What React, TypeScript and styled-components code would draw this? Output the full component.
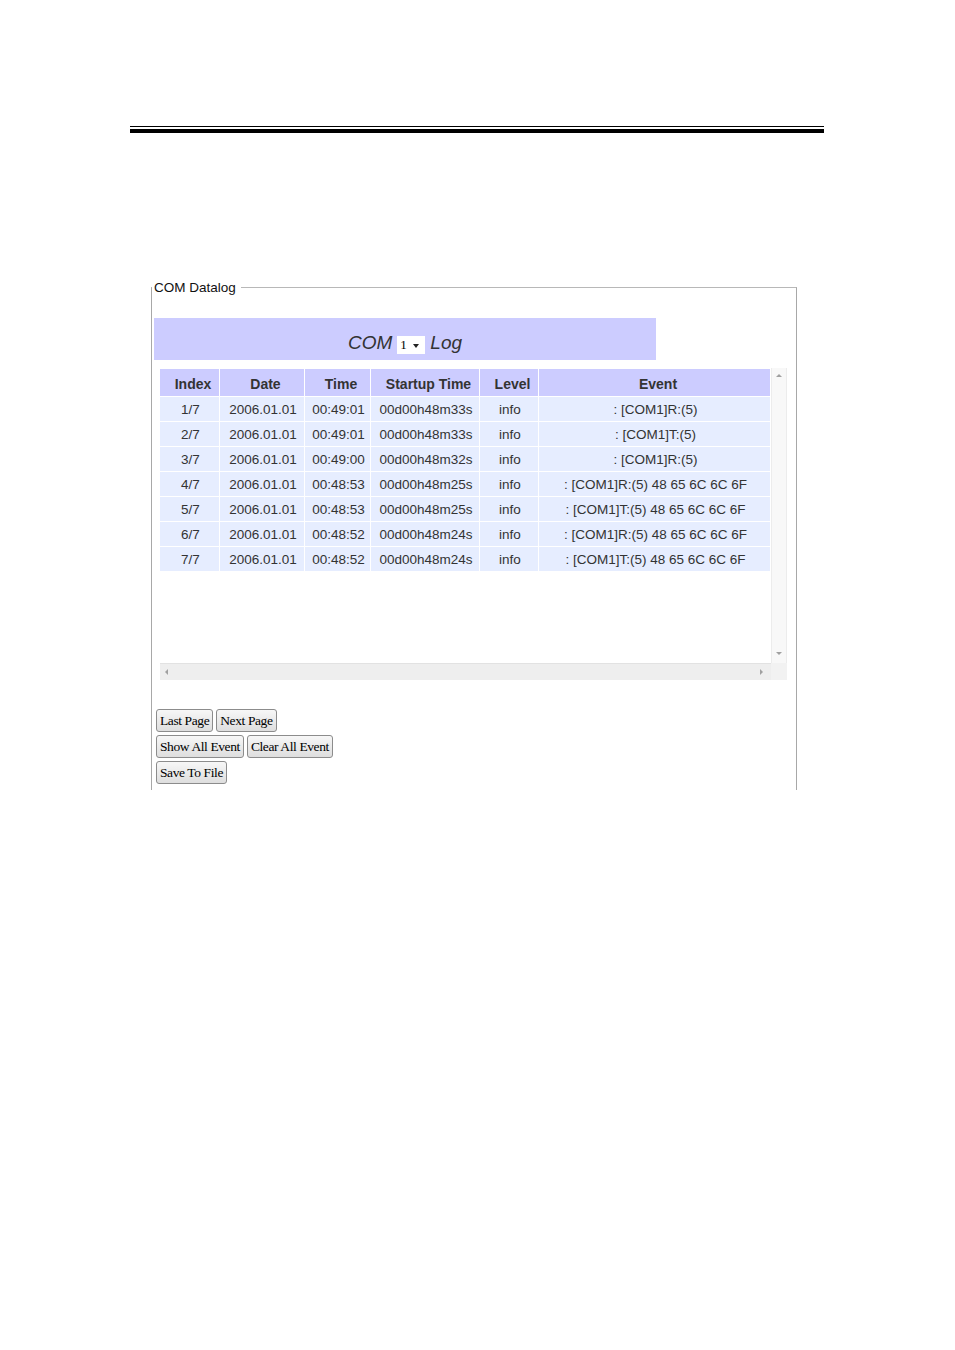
import styled, { createGlobalStyle } from 'styled-components';

const GlobalStyle = createGlobalStyle`
  html, body {
    margin: 0;
    padding: 0;
    background: #fff;
  }
  body {
    font-family: "Liberation Sans", Arial, sans-serif;
  }
`;

const Page = styled.div`
  width: 955px;
  min-height: 1350px;
  padding-top: 126px;
  box-sizing: border-box;
`;

const TopRule = styled.div`
  margin-left: 130px;
  width: 694px;
  height: 2px;
  border-top: 1px solid #000;
  border-bottom: 4px solid #000;
`;

const Panel = styled.fieldset`
  box-sizing: border-box;
  margin: 147px 0 0 151px;
  width: 646px;
  min-width: 0;
  padding: 0 0 6px 0;
  border: 1px solid #a8a8a8;
  border-top-color: #b8b8b8;
  border-bottom: none;
`;

const PanelLegend = styled.legend`
  padding: 0 5px 0 2px;
  margin: 0;
  font-size: 13.5px;
  line-height: 15px;
  color: #111;
`;

const TitleBar = styled.div`
  margin: 23px 0 0 2px;
  width: 502px;
  height: 42px;
  box-sizing: border-box;
  padding-top: 8px;
  background: #ccccff;
  display: flex;
  align-items: center;
  justify-content: center;
  gap: 5px;
  font-size: 19px;
  font-style: italic;
  color: #333;
`;

const PortSelect = styled.div`
  width: 28px;
  height: 18px;
  box-sizing: border-box;
  background: #fff;
  display: flex;
  align-items: center;
  padding-left: 3px;
  gap: 6px;
  font-family: "Liberation Serif", "Times New Roman", serif;
  font-style: normal;
  font-size: 13px;
  color: #000;
  margin-top: 4px;
`;

const Caret = styled.span`
  width: 0;
  height: 0;
  border-left: 3.5px solid transparent;
  border-right: 3.5px solid transparent;
  border-top: 4px solid #222;
  margin-top: 2px;
`;

const ScrollBox = styled.div`
  margin: 8px 0 0 8px;
  width: 627px;
  display: grid;
  grid-template-columns: 611px 16px;
  grid-template-rows: 295px 17px;
`;

const Viewport = styled.div`
  overflow: hidden;
  background: #fff;
`;

const VBar = styled.div`
  background: #f8f8f8;
  border-left: 1px solid #ececec;
  border-right: 1px solid #ececec;
  box-sizing: border-box;
  display: flex;
  flex-direction: column;
  justify-content: space-between;
  align-items: center;
  padding: 6px 0 8px;
`;

const HBar = styled.div`
  background: #eeeeee;
  border-top: 1px solid #e2e2e2;
  box-sizing: border-box;
  display: flex;
  justify-content: space-between;
  align-items: center;
  padding: 0 8px 0 5px;
`;

const Corner = styled.div`
  background: #f2f2f2;
`;

const Arrow = styled.span<{ $dir: 'up' | 'down' | 'left' | 'right' }>`
  width: 0;
  height: 0;
  ${({ $dir }) =>
    $dir === 'up'
      ? 'border-left: 3px solid transparent; border-right: 3px solid transparent; border-bottom: 3px solid #a0a0a0;'
      : $dir === 'down'
      ? 'border-left: 3px solid transparent; border-right: 3px solid transparent; border-top: 3px solid #a0a0a0;'
      : $dir === 'left'
      ? 'border-top: 3px solid transparent; border-bottom: 3px solid transparent; border-right: 3px solid #a0a0a0;'
      : 'border-top: 3px solid transparent; border-bottom: 3px solid transparent; border-left: 3px solid #a0a0a0;'}
`;

const LogTable = styled.table`
  border-collapse: separate;
  border-spacing: 1px;
  margin: 0 0 0 -1px;
  color: #333;

  th {
    height: 27px;
    background: #ccccff;
    font-size: 14px;
    font-weight: bold;
    padding: 3px 0 0 7px;
    box-sizing: border-box;
  }

  td {
    height: 24px;
    background: #e6edff;
    font-size: 13.5px;
    text-align: center;
    padding: 0 0 0 2px;
  }
`;

const ButtonArea = styled.div`
  display: flex;
  flex-direction: column;
  gap: 3px;
  margin: 29px 0 0 4px;
`;

const ButtonRow = styled.div`
  display: flex;
  gap: 3px;
`;

const FormButton = styled.button`
  height: 23px;
  padding: 0 3px;
  border: 1px solid #8c8c8c;
  border-radius: 3px;
  background: linear-gradient(#f7f7f7, #dedede);
  font-family: "Liberation Serif", "Times New Roman", serif;
  font-size: 13.5px;
  letter-spacing: -0.4px;
  color: #000;
`;

const columns = [
  { label: 'Index', width: 59 },
  { label: 'Date', width: 84 },
  { label: 'Time', width: 65 },
  { label: 'Startup Time', width: 108 },
  { label: 'Level', width: 58 },
  { label: 'Event', width: 231 },
];

const rows = [
  ['1/7', '2006.01.01', '00:49:01', '00d00h48m33s', 'info', ': [COM1]R:(5)'],
  ['2/7', '2006.01.01', '00:49:01', '00d00h48m33s', 'info', ': [COM1]T:(5)'],
  ['3/7', '2006.01.01', '00:49:00', '00d00h48m32s', 'info', ': [COM1]R:(5)'],
  ['4/7', '2006.01.01', '00:48:53', '00d00h48m25s', 'info', ': [COM1]R:(5) 48 65 6C 6C 6F'],
  ['5/7', '2006.01.01', '00:48:53', '00d00h48m25s', 'info', ': [COM1]T:(5) 48 65 6C 6C 6F'],
  ['6/7', '2006.01.01', '00:48:52', '00d00h48m24s', 'info', ': [COM1]R:(5) 48 65 6C 6C 6F'],
  ['7/7', '2006.01.01', '00:48:52', '00d00h48m24s', 'info', ': [COM1]T:(5) 48 65 6C 6C 6F'],
];

export default function App() {
  return (
    <>
      <GlobalStyle />
      <Page>
        <TopRule />

        <Panel>
          <PanelLegend>COM Datalog</PanelLegend>

          <TitleBar>
            <span>COM</span>
            <PortSelect>
              1<Caret />
            </PortSelect>
            <span>Log</span>
          </TitleBar>

          <ScrollBox>
            <Viewport>
              <LogTable>
                <thead>
                  <tr>
                    {columns.map((col) => (
                      <th key={col.label} style={{ width: col.width }}>
                        {col.label}
                      </th>
                    ))}
                  </tr>
                </thead>
                <tbody>
                  {rows.map((row, index) => (
                    <tr key={index}>
                      {row.map((cell, i) => (
                        <td key={i}>{cell}</td>
                      ))}
                    </tr>
                  ))}
                </tbody>
              </LogTable>
            </Viewport>
            <VBar>
              <Arrow $dir="up" />
              <Arrow $dir="down" />
            </VBar>
            <HBar>
              <Arrow $dir="left" />
              <Arrow $dir="right" />
            </HBar>
            <Corner />
          </ScrollBox>

          <ButtonArea>
            <ButtonRow>
              <FormButton>Last Page</FormButton>
              <FormButton>Next Page</FormButton>
            </ButtonRow>
            <ButtonRow>
              <FormButton>Show All Event</FormButton>
              <FormButton>Clear All Event</FormButton>
            </ButtonRow>
            <ButtonRow>
              <FormButton>Save To File</FormButton>
            </ButtonRow>
          </ButtonArea>
        </Panel>
      </Page>
    </>
  );
}
